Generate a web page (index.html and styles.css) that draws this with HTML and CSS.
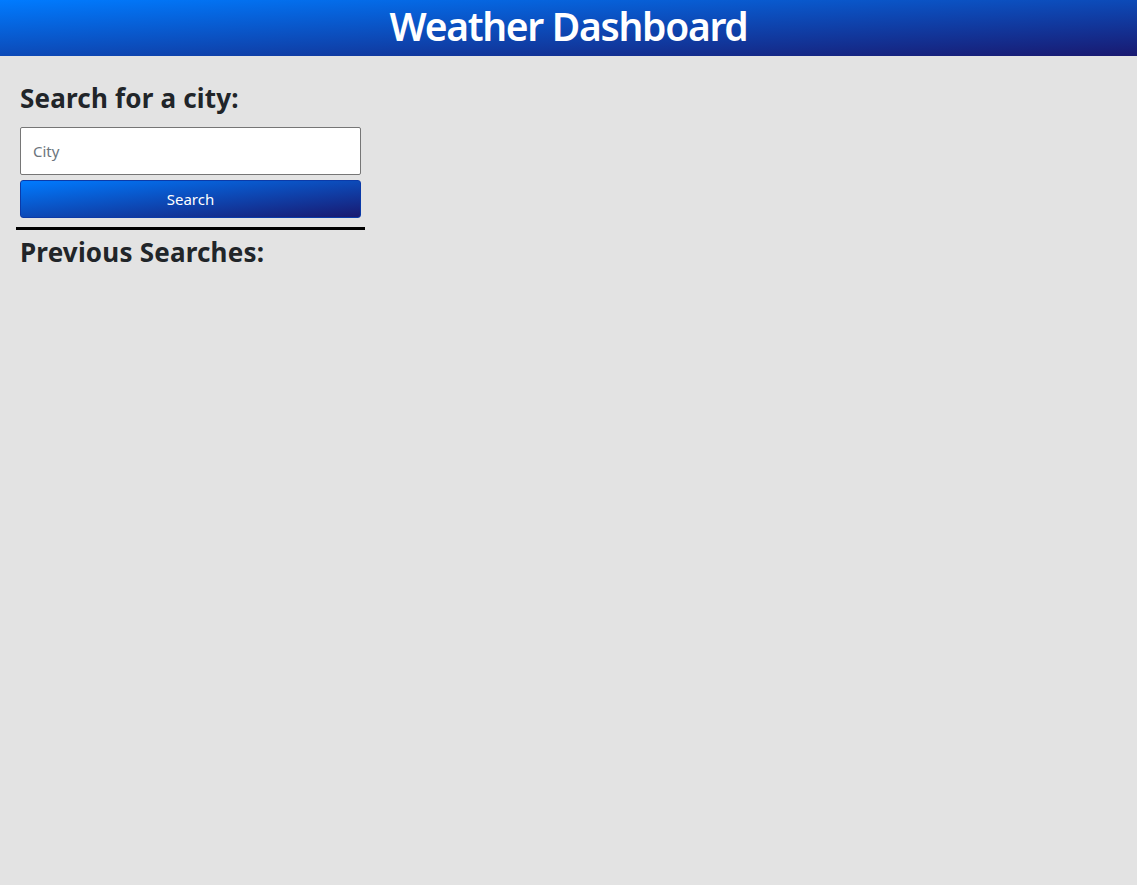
FILE: index.html
```html
<!DOCTYPE html>
<html lang="en">
<head>
<meta charset="utf-8">
<title>Weather Dashboard</title>
<link rel="stylesheet" href="styles.css">
</head>
<body>
<header class="topbar">
  <h1 class="title">Weather Dashboard</h1>
</header>
<main class="layout">
  <aside class="sidebar">
    <div class="search-block">
      <h4 class="heading">Search for a city:</h4>
      <input class="city-input" type="text" placeholder="City">
      <button class="search-btn" type="button">Search</button>
    </div>
    <hr class="divider">
    <div class="history-block">
      <h4 class="heading">Previous Searches:</h4>
    </div>
  </aside>
</main>
</body>
</html>
```
FILE: styles.css
```css
* { box-sizing: border-box; }
html, body { margin: 0; padding: 0; }
body {
  background: #e3e3e3;
  font-family: "Noto Sans", "Open Sans", sans-serif;
  color: #212529;
  min-height: 885px;
}
.topbar {
  height: 56px;
  padding-bottom: 4px;
  background: linear-gradient(to bottom right, #007bff, #191970);
  display: flex;
  align-items: center;
  justify-content: center;
}
.title {
  margin: 0;
  color: #fff;
  font-size: 39px;
  font-weight: 600;
  line-height: 1.2;
  letter-spacing: -1.3px;
}
.layout {
  display: flex;
  padding: 0 16px;
}
.sidebar {
  width: 349px;
  display: flex;
  flex-direction: column;
}
.search-block, .history-block {
  padding: 0 4px;
  display: flex;
  flex-direction: column;
}
.search-block { padding-top: 24px; }
.heading {
  margin: 0;
  font-size: 26px;
  font-weight: 700;
  line-height: 36px;
  color: #212529;
  letter-spacing: 0.2px;
}
.search-block .heading { margin-bottom: 11px; }
.city-input {
  height: 48px;
  width: 100%;
  border: 1px solid #767676;
  border-radius: 2px;
  background: #fff;
  padding: 0 12px;
  font-family: inherit;
  font-size: 15px;
  color: #495057;
  outline: none;
}
.city-input::placeholder { color: #6c757d; }
.search-btn {
  margin-top: 5px;
  height: 38px;
  width: 100%;
  border: 1px solid #0b3aa8;
  border-radius: 3px;
  background: linear-gradient(to bottom right, #007bff, #191970);
  color: #fff;
  font-family: inherit;
  font-size: 15px;
  cursor: pointer;
}
.divider {
  margin: 9px 0 4px 0;
  border: 0;
  border-top: 3px solid #000;
  width: 100%;
}
```
